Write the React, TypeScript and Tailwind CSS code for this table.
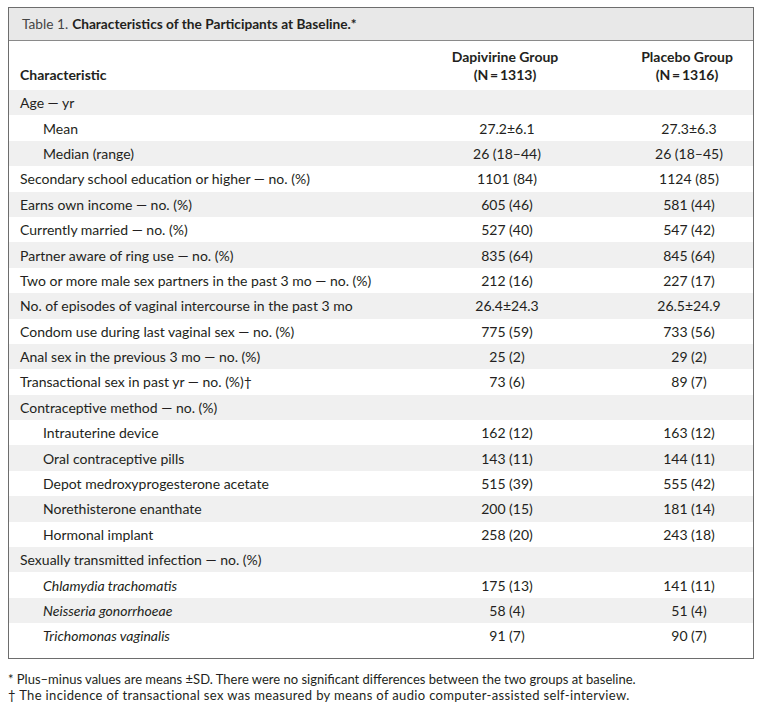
const rows: Array<{ label: React.ReactNode; a?: string; b?: string; indent?: boolean }> = [
  { label: 'Age — yr' },
  { label: 'Mean', a: '27.2±6.1', b: '27.3±6.3', indent: true },
  { label: 'Median (range)', a: '26 (18–44)', b: '26 (18–45)', indent: true },
  { label: 'Secondary school education or higher — no. (%)', a: '1101 (84)', b: '1124 (85)' },
  { label: 'Earns own income — no. (%)', a: '605 (46)', b: '581 (44)' },
  { label: 'Currently married — no. (%)', a: '527 (40)', b: '547 (42)' },
  { label: 'Partner aware of ring use — no. (%)', a: '835 (64)', b: '845 (64)' },
  { label: 'Two or more male sex partners in the past 3 mo — no. (%)', a: '212 (16)', b: '227 (17)' },
  { label: 'No. of episodes of vaginal intercourse in the past 3 mo', a: '26.4±24.3', b: '26.5±24.9' },
  { label: 'Condom use during last vaginal sex — no. (%)', a: '775 (59)', b: '733 (56)' },
  { label: 'Anal sex in the previous 3 mo — no. (%)', a: '25 (2)', b: '29 (2)' },
  { label: 'Transactional sex in past yr — no. (%)†', a: '73 (6)', b: '89 (7)' },
  { label: 'Contraceptive method — no. (%)' },
  { label: 'Intrauterine device', a: '162 (12)', b: '163 (12)', indent: true },
  { label: 'Oral contraceptive pills', a: '143 (11)', b: '144 (11)', indent: true },
  { label: 'Depot medroxyprogesterone acetate', a: '515 (39)', b: '555 (42)', indent: true },
  { label: 'Norethisterone enanthate', a: '200 (15)', b: '181 (14)', indent: true },
  { label: 'Hormonal implant', a: '258 (20)', b: '243 (18)', indent: true },
  { label: 'Sexually transmitted infection — no. (%)' },
  { label: <i>Chlamydia trachomatis</i>, a: '175 (13)', b: '141 (11)', indent: true },
  { label: <i>Neisseria gonorrhoeae</i>, a: '58 (4)', b: '51 (4)', indent: true },
  { label: <i>Trichomonas vaginalis</i>, a: '91 (7)', b: '90 (7)', indent: true },
]

export default function App() {
  return (
    <div className="w-[764px] h-[709px] bg-white text-[#231f20] font-['Lato',sans-serif] text-[14px] pt-[7px] px-[8px]">
      <div className="border-[1.5px] border-[#6d6d6d] w-[746px]">
        {/* title */}
        <div className="bg-[#e8e8e8] h-[33px] flex items-center pl-[13px] border-b border-[#8a8a8a] text-[13.7px]">
          <span className="text-[#444]">Table 1.</span>
          <span className="font-bold ml-[4px]">Characteristics of the Participants at Baseline.*</span>
        </div>

        {/* header */}
        <div className="grid grid-cols-[1fr_236px_128px] h-[49px] items-end pb-[6px] font-bold leading-[18px]">
          <div className="pl-[11px]">Characteristic</div>
          <div className="text-center pr-[4px]">
            Dapivirine Group
            <br />
            (N{'\u2009'}={'\u2009'}1313)
          </div>
          <div className="text-center pr-[4px]">
            Placebo Group
            <br />
            (N{'\u2009'}={'\u2009'}1316)
          </div>
        </div>

        {rows.map((r, i) => (
          <div
            key={i}
            className={
              'grid grid-cols-[1fr_236px_128px] h-[25.4px] items-center whitespace-nowrap ' +
              (i % 2 === 0 ? 'bg-[#f0f0f0]' : 'bg-white')
            }
          >
            <div className={r.indent ? 'pl-[34px]' : 'pl-[11px]'}>{r.label}</div>
            <div className="text-center">{r.a}</div>
            <div className="text-center">{r.b}</div>
          </div>
        ))}
        <div className="h-[9px]" />
      </div>

      <div className="mt-[12px] text-[13px] leading-[16px] whitespace-nowrap">
        <div>* Plus–minus values are means ±SD. There were no significant differences between the two groups at baseline.</div>
        <div className="tracking-[0.35px]">† The incidence of transactional sex was measured by means of audio computer-assisted self-interview.</div>
      </div>
    </div>
  )
}
